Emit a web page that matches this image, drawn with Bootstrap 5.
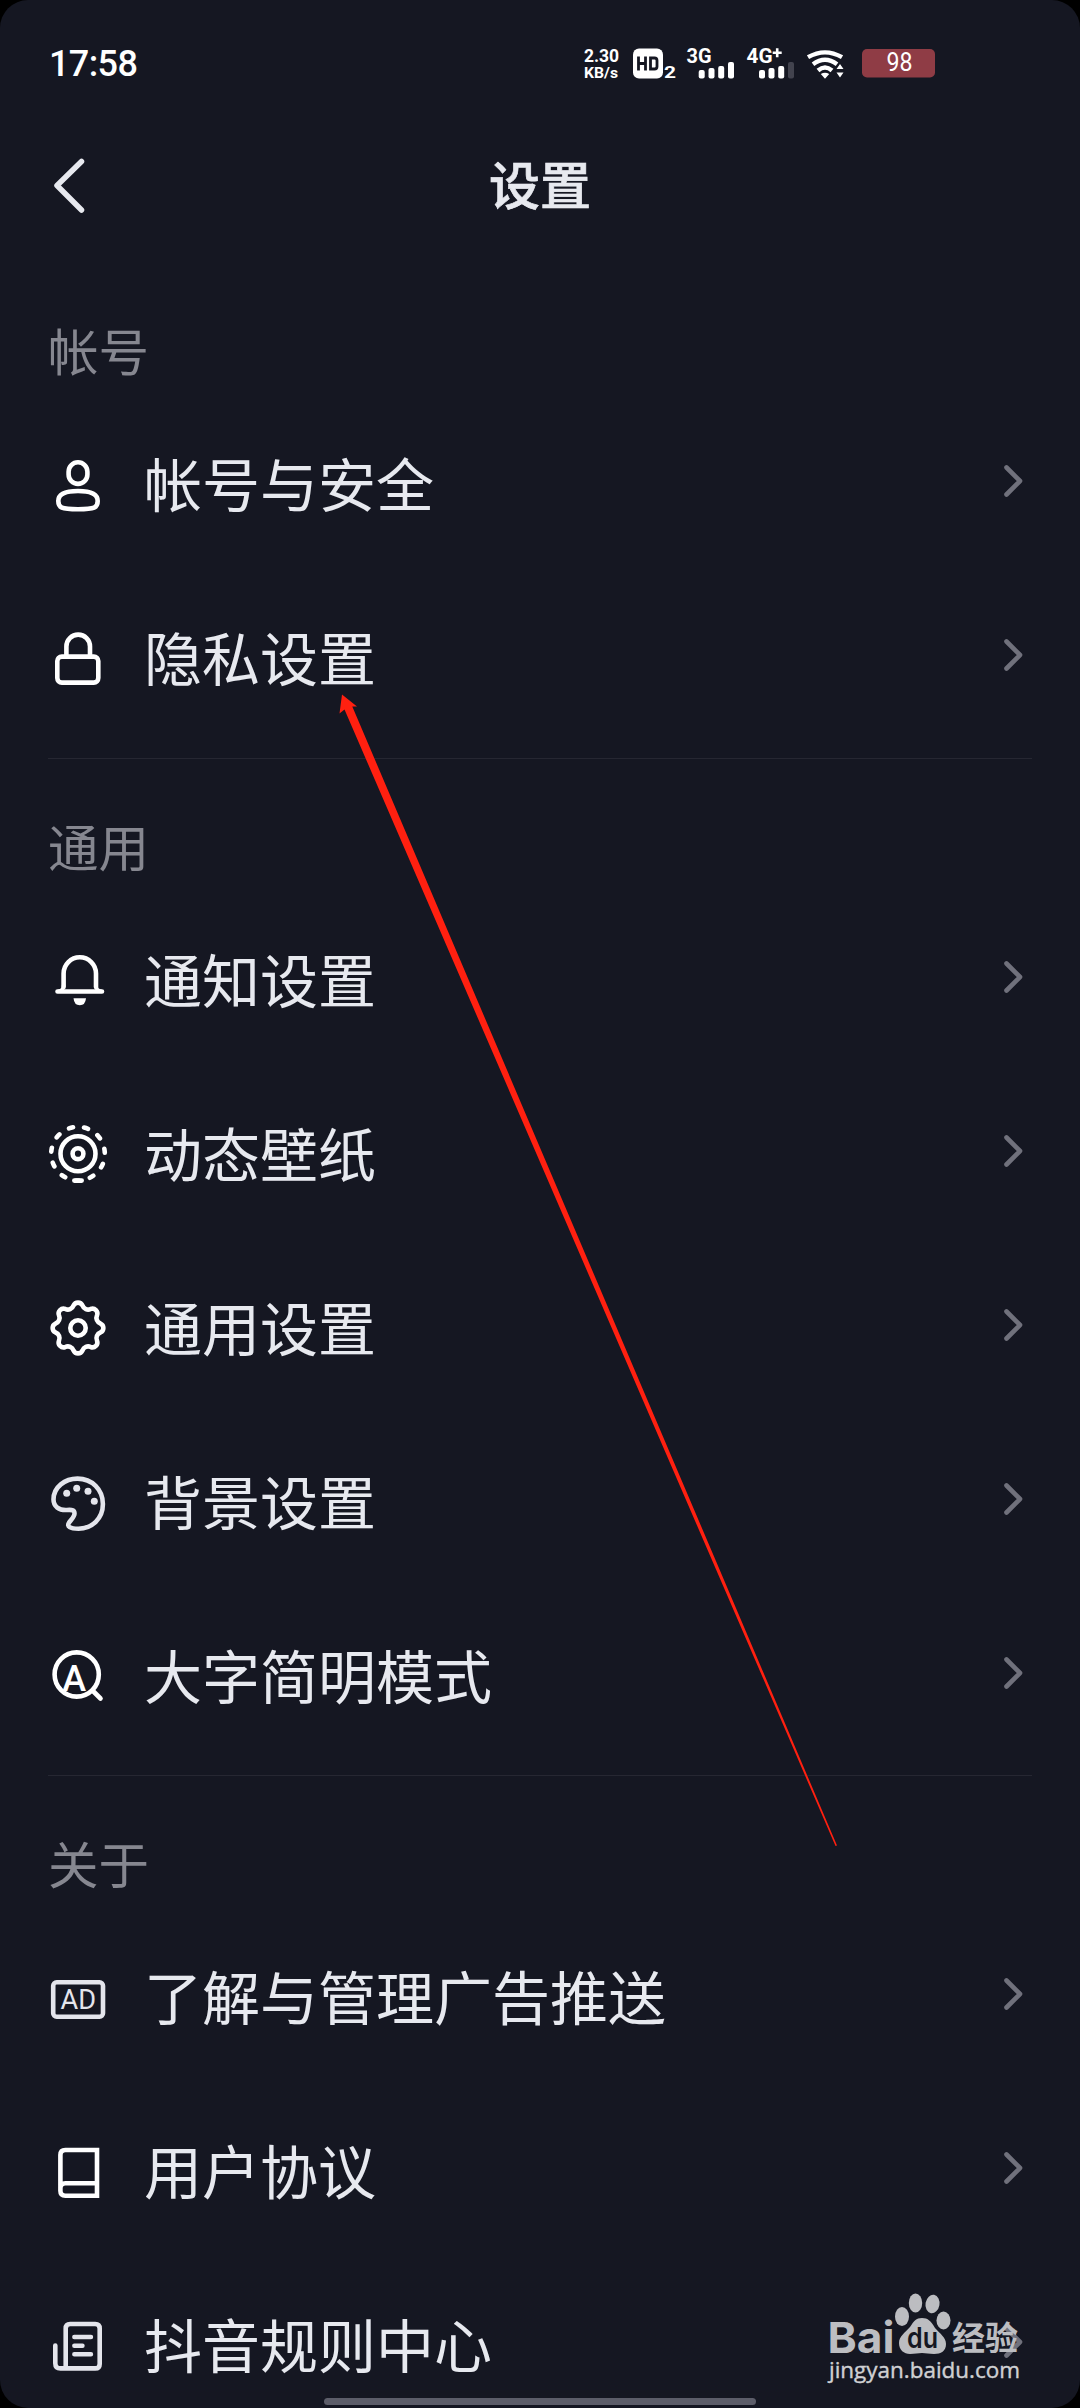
<!DOCTYPE html>
<html lang="zh-CN" data-bs-theme="dark">
<head>
<meta charset="utf-8">
<meta name="viewport" content="width=device-width, initial-scale=1">
<title>设置</title>
<link href="https://cdn.jsdelivr.net/npm/bootstrap@5.3.0/dist/css/bootstrap.min.css" rel="stylesheet">
<style>
  html { background: #000; }
  body { background: #000; margin: 0; font-family: Roboto, "Noto Sans CJK SC", sans-serif; }
  .screen { width: 1080px; height: 2408px; background: #151722; border-radius: 28px; color: #e7e9ef; }
  .status { height: 124px; padding: 1px 145px 0 49px; color: #fff; }
  .clock { font-size: 36px; font-weight: 500; line-height: 1; letter-spacing: -.6px; margin-top: 3px; }
  .indicators { margin-bottom: 4px; }
  .topbar { height: 139px; padding: 0 48px 14px; }
  .topbar h1 { font-size: 51px; font-weight: 500; line-height: 1; color: #e7e9ef; padding-top: 2px; -webkit-text-stroke: .7px #e7e9ef; }
  .side { width: 58px; }
  .group-label { height: 131px; padding: 66px 48px 0; font-size: 50.5px; line-height: 50px; color: #868790; }
  .setting { height: 174px; padding: 0 55px 0 48px; background: transparent; border: 0; border-radius: 0; }
  .setting .ico { width: 60px; height: 60px; margin-top: 8px; color: #fff; }
  .setting .ico.dim { color: #e4e5ec; }
  .setting .name { margin-left: 36px; font-size: 58px; line-height: 58px; color: #e7e9ef; padding-top: 12px; }
  .chev { width: 22px; height: 36px; color: #70717c; }
  .rule { height: 1px; margin: 16px 48px 0; background: #262732; }
  .rule.tight { margin-top: 15px; }
  .ico, .chev, .back { fill: none; stroke: currentColor; stroke-width: 4.6; stroke-linecap: round; stroke-linejoin: round; }
  .ico text { stroke: none; fill: currentColor; }
  .layer { left: 0; top: 0; pointer-events: none; }
  .home { width: 432px; height: 7px; left: 324px; top: 2398px; background: #5c5d69; }
</style>
</head>
<body>
<main class="screen position-relative overflow-hidden">
  <header>
    <div class="status d-flex align-items-center justify-content-between">
      <span class="clock">17:58</span>
      <svg class="indicators" width="355" height="40" viewBox="0 0 355 40" fill="#fff" font-family="Roboto, sans-serif" font-weight="700">
        <text x="4" y="21.200" font-size="17.500" textLength="35">2.30</text>
        <text x="4" y="36.800" font-size="15.500" textLength="34" lengthAdjust="spacingAndGlyphs">KB/s</text>
        <rect x="53" y="7.500" width="30" height="30" rx="6"/>
        <path d="M58.500 15.500v14M65.500 15.500v14M58.500 22.500h7M70.500 17h4q2.500 0 2.500 2.500v6q0 2.500-2.500 2.500h-4z" fill="none" stroke="#151722" stroke-width="2.800"/>
        <text x="84" y="37.200" font-size="16.500" textLength="12" lengthAdjust="spacingAndGlyphs">2</text>
        <text x="106.500" y="22.200" font-size="20" textLength="25" lengthAdjust="spacingAndGlyphs">3G</text>
        <g><rect x="118.700" y="29" width="6" height="8.500" rx="2"/><rect x="128.500" y="27" width="6" height="10.500" rx="2"/><rect x="138.200" y="25" width="6" height="12.500" rx="2"/><rect x="148" y="21" width="6" height="16.500" rx="2"/></g>
        <text x="166.500" y="22.200" font-size="20" textLength="26" lengthAdjust="spacingAndGlyphs">4G</text>
        <path d="M197.200 7.300v9M192.700 11.800h9" stroke="#fff" stroke-width="2.600"/>
        <g><rect x="179" y="29" width="6" height="8.500" rx="2"/><rect x="188.500" y="27" width="6" height="10.500" rx="2"/><rect x="198.200" y="25" width="6" height="12.500" rx="2"/><rect x="208" y="21" width="6" height="16.500" rx="2" fill="#42434e"/></g>
        <g fill="none" stroke="#fff" stroke-width="4.400"><path d="M228 16.200Q245 6.500 262 16.200"/><path d="M233 23.200Q245 14.500 257 23.200"/><path d="M238 29.500Q245 23.500 252 29.500"/></g>
        <path d="M240.800 33q4.200-2.600 8.400 0l-4.200 4.800zM256.500 28l3.500-5 3.500 5zM256.500 31.500l3.500 5 3.500-5z"/>
        <rect x="282" y="8" width="73" height="28.500" rx="5" fill="#8f3c45"/>
        <text x="306.500" y="30.200" font-size="25" font-weight="400" textLength="26" lengthAdjust="spacingAndGlyphs">98</text>
      </svg>
    </div>
    <div class="topbar d-flex align-items-center justify-content-between">
      <svg class="back side" height="60" viewBox="0 0 58 60" style="stroke-width:5.500"><path d="M33.500 4.500L9 28.500l24.500 24.500"/></svg>
      <h1 class="m-0">设置</h1>
      <span class="side"></span>
    </div>
  </header>

  <section>
    <div class="group-label">帐号</div>
    <div class="list-group list-group-flush">
      <div class="setting list-group-item d-flex align-items-center">
        <svg class="ico" viewBox="0 0 60 60"><rect x="20.600" y="7.300" width="18.800" height="21.600" rx="9.400"/><path d="M30 36c10.500 0 19.700 2.500 19.700 10 0 6.700-3 8.200-19.700 8.200s-19.700-1.500-19.700-8.200c0-7.500 9.200-10 19.700-10z"/></svg>
        <span class="name">帐号与安全</span>
        <svg class="chev ms-auto" viewBox="0 0 22 36"><path d="M3.500 4.500L17 18 3.500 31.500"/></svg>
      </div>
      <div class="setting list-group-item d-flex align-items-center">
        <svg class="ico" viewBox="0 0 60 60"><rect x="9.300" y="27.600" width="41" height="26" rx="4.500"/><path d="M18.400 27V17.400a11.800 11.800 0 0 1 23.600 0V27"/></svg>
        <span class="name">隐私设置</span>
        <svg class="chev ms-auto" viewBox="0 0 22 36"><path d="M3.500 4.500L17 18 3.500 31.500"/></svg>
      </div>
    </div>
    <div class="rule"></div>
  </section>

  <section>
    <div class="group-label">通用</div>
    <div class="list-group list-group-flush">
      <div class="setting list-group-item d-flex align-items-center">
        <svg class="ico" viewBox="0 0 60 60"><path d="M9.500 40.500H54M15.600 36V22.500a16.200 16.200 0 0 1 32.400 0V36"/><path d="M15.600 34q0 5.500-5 6.300M48 34q0 5.500 5 6.300" stroke-width="3.500"/><path d="M25.500 47.300h12.500q-.6 7-6.200 7t-6.300-7z" fill="currentColor" stroke="none"/></svg>
        <span class="name">通知设置</span>
        <svg class="chev ms-auto" viewBox="0 0 22 36"><path d="M3.500 4.500L17 18 3.500 31.500"/></svg>
      </div>
      <div class="setting list-group-item d-flex align-items-center">
        <svg class="ico" viewBox="0 0 60 60"><circle cx="30" cy="28.700" r="17.500"/><circle cx="30" cy="28.700" r="5.400"/><circle cx="30" cy="28.700" r="26.800" stroke-dasharray="4 11.308" stroke-dashoffset="2" transform="rotate(90 30 28.700)"/><path d="M26.300 55.600h7.400"/></svg>
        <span class="name">动态壁纸</span>
        <svg class="chev ms-auto" viewBox="0 0 22 36"><path d="M3.500 4.500L17 18 3.500 31.500"/></svg>
      </div>
      <div class="setting list-group-item d-flex align-items-center">
        <svg class="ico" viewBox="0 0 60 60"><circle cx="30" cy="29" r="7.700"/><path d="M25.530 6.540A4.900 4.900 0 0 1 34.470 6.540A6 6 0 0 0 42.720 9.960A4.900 4.900 0 0 1 49.040 16.280A6 6 0 0 0 52.460 24.530A4.900 4.900 0 0 1 52.460 33.470A6 6 0 0 0 49.040 41.720A4.900 4.900 0 0 1 42.720 48.040A6 6 0 0 0 34.470 51.460A4.900 4.900 0 0 1 25.530 51.460A6 6 0 0 0 17.280 48.040A4.900 4.900 0 0 1 10.960 41.720A6 6 0 0 0 7.540 33.470A4.900 4.900 0 0 1 7.540 24.530A6 6 0 0 0 10.960 16.280A4.900 4.900 0 0 1 17.280 9.960A6 6 0 0 0 25.530 6.540z"/></svg>
        <span class="name">通用设置</span>
        <svg class="chev ms-auto" viewBox="0 0 22 36"><path d="M3.500 4.500L17 18 3.500 31.500"/></svg>
      </div>
      <div class="setting list-group-item d-flex align-items-center">
        <svg class="ico dim" viewBox="0 0 60 60"><path d="M29.500 5.600C44 5.600 54.900 16.500 54.900 31S44 55.700 30.500 55.700c-8.500 0-12-2.200-9.500-6 3-4 5.500-6 5.500-9.200 0-3.200-2-4-7.500-3.500C11 37.500 5.500 33.500 5.500 26.500 5.500 14 17 5.600 29.500 5.600z"/><g fill="currentColor" stroke="none"><circle cx="18.700" cy="20.300" r="3.500"/><circle cx="28.700" cy="15.300" r="3.500"/><circle cx="40" cy="18.300" r="3.500"/><circle cx="46.300" cy="28.300" r="3.500"/></g></svg>
        <span class="name">背景设置</span>
        <svg class="chev ms-auto" viewBox="0 0 22 36"><path d="M3.500 4.500L17 18 3.500 31.500"/></svg>
      </div>
      <div class="setting list-group-item d-flex align-items-center">
        <svg class="ico" viewBox="0 0 60 60"><circle cx="28.700" cy="27.500" r="22.100"/><path d="M44.500 43.500l8 8"/><text x="26.200" y="43.500" font-size="36" font-weight="500" text-anchor="middle" font-family="Roboto, sans-serif">A</text></svg>
        <span class="name">大字简明模式</span>
        <svg class="chev ms-auto" viewBox="0 0 22 36"><path d="M3.500 4.500L17 18 3.500 31.500"/></svg>
      </div>
    </div>
    <div class="rule tight"></div>
  </section>

  <section>
    <div class="group-label">关于</div>
    <div class="list-group list-group-flush">
      <div class="setting list-group-item d-flex align-items-center">
        <svg class="ico dim" viewBox="0 0 60 60"><rect x="5.200" y="14.300" width="49.800" height="34.400" rx="3.500"/><text x="12.500" y="41.300" font-size="28" textLength="35.500" lengthAdjust="spacingAndGlyphs" font-family="Roboto, sans-serif">AD</text></svg>
        <span class="name">了解与管理广告推送</span>
        <svg class="chev ms-auto" viewBox="0 0 22 36"><path d="M3.500 4.500L17 18 3.500 31.500"/></svg>
      </div>
      <div class="setting list-group-item d-flex align-items-center">
        <svg class="ico" viewBox="0 0 60 60"><path d="M49 41.300V8H17.400q-5 0-5 5v35.700q0 5 5 5H49V41.300H17.400q-5 0-5 5" style="stroke-linejoin:miter"/></svg>
        <span class="name">用户协议</span>
        <svg class="chev ms-auto" viewBox="0 0 22 36"><path d="M3.500 4.500L17 18 3.500 31.500"/></svg>
      </div>
      <div class="setting list-group-item d-flex align-items-center">
        <svg class="ico dim" viewBox="0 0 60 60"><path d="M17.700 52V12.500q0-4.500 4.500-4.500h25q4.500 0 4.500 4.500v35.400q0 4.500-4.500 4.500H12.500q-5.200 0-5.200-5.200V29.500"/><path d="M26.300 21H43M26.300 29.700h8.200M26.300 38.300H43" stroke-width="4.400"/></svg>
        <span class="name">抖音规则中心</span>
        <svg class="chev ms-auto" viewBox="0 0 22 36"><path d="M3.500 4.500L17 18 3.500 31.500"/></svg>
      </div>
    </div>
  </section>

  <div class="home position-absolute rounded-pill"></div>

  <!-- watermark and pointer arrow float above the list -->
  <svg class="layer position-absolute" width="1080" height="2408" viewBox="0 0 1080 2408">
    <path d="M342 694.500L357 706.500 352.300 706.500 837 1845.500 835.500 1846 344.500 709.500 339.500 713.500z" fill="#ff2010"/>
    <g fill="#bcbdc1">
      <text x="827.500" y="2352.500" font-family="Inter, 'Liberation Sans', sans-serif" font-size="43" font-weight="700" textLength="67" lengthAdjust="spacingAndGlyphs">Bai</text>
      <ellipse cx="902" cy="2316.500" rx="7" ry="9.500"/><ellipse cx="915.500" cy="2303" rx="6.700" ry="9.500"/>
      <ellipse cx="932.500" cy="2304" rx="7" ry="9.300" transform="rotate(10 932.500 2304)"/><ellipse cx="943.500" cy="2320.500" rx="7" ry="9"/>
      <path d="M922 2318c6 0 9 3 13 10 5 6 11 9 11 16 0 7-5 10-12 10-5 0-8-1-12-1s-7 1-12 1c-6 0-11-4-11-11 0-7 6-10 11-16 4-6 6-9 12-9z"/>
      <text x="907" y="2348" font-family="Inter, 'Liberation Sans', sans-serif" font-size="28" font-weight="600" textLength="31" lengthAdjust="spacingAndGlyphs" fill="#151722">du</text>
      <text x="952" y="2349.500" font-family="'Noto Sans CJK SC', sans-serif" font-size="33" font-weight="700" textLength="66">经验</text>
      <text x="829" y="2378" font-family="'Open Sans', 'Noto Sans', sans-serif" font-size="22.500" textLength="191" lengthAdjust="spacingAndGlyphs" fill="#cfd0d3" stroke="#cfd0d3" stroke-width=".4">jingyan.baidu.com</text>
    </g>
  </svg>
</main>
<script src="https://cdn.jsdelivr.net/npm/bootstrap@5.3.0/dist/js/bootstrap.bundle.min.js"></script>
</body>
</html>
